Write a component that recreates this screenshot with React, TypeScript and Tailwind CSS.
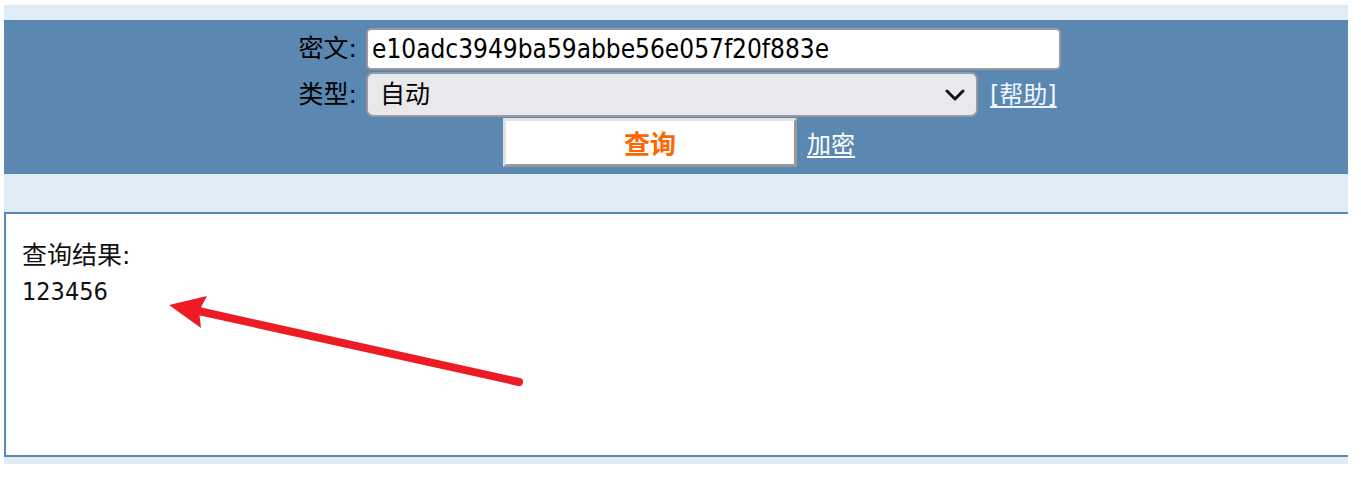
import React from "react";

const sans = { fontFamily: '"DejaVu Sans", "Noto Sans CJK SC", sans-serif' };
const cond = { fontFamily: '"DejaVu Sans Condensed", "DejaVu Sans", "Noto Sans CJK SC", sans-serif', fontStretch: "condensed" as const };

export default function App() {
  return (
    <div className="w-[1361px] min-h-[493px] bg-white pt-[5px] pl-[4px]" style={sans}>
      <div className="w-[1344px] bg-[#e0ecf5] pt-[15px] pb-[7px]">
        {/* header form */}
        <div className="h-[154px] bg-[#5b88b1] pt-[8px] pl-[284px]">
          <div className="grid grid-cols-[74px_auto] gap-x-[4px]">
            <div className="h-[42px] flex items-center justify-end pr-[5px] text-[25px] text-black whitespace-nowrap">
              密文:
            </div>
            <div className="h-[42px] flex items-center">
              <input
                readOnly
                value="e10adc3949ba59abbe56e057f20f883e"
                className="w-[695px] h-[42px] bg-white border-2 border-[#9a98a0] rounded-[5px] pl-[4px] text-[26px] text-black outline-none"
                style={cond}
              />
            </div>

            <div className="mt-[2px] h-[45px] flex items-center justify-end pr-[5px] text-[25px] text-black whitespace-nowrap">
              类型:
            </div>
            <div className="mt-[2px] h-[45px] flex items-center">
              <div className="w-[612px] h-[45px] bg-[#e9e8ed] border-2 border-[#9a98a0] rounded-[7px] pl-[12px] pr-[10px] flex items-center justify-between">
                <span className="text-[25px] text-black leading-none">自动</span>
                <svg width="20" height="12" viewBox="0 0 20 12" className="mr-[1px]">
                  <path d="M2 2 L10 10 L18 2" fill="none" stroke="#111" strokeWidth="3" strokeLinecap="round" strokeLinejoin="round" />
                </svg>
              </div>
              <a href="#" className="ml-[12px] text-[24px] text-[#f0f5ff] underline underline-offset-[3px] [text-decoration-skip-ink:none] leading-none">
                [帮助]
              </a>
            </div>

            <div className="mt-[1px] h-[49px]" />
            <div className="mt-[1px] h-[49px] flex items-center pl-[137px]">
              <button className="w-[294px] h-[49px] bg-white border-[3px] border-t-[#e2e2e2] border-l-[#e2e2e2] border-b-[#999999] border-r-[#999999] pt-[4px] text-[26px] font-bold text-[#ff6600] leading-none">
                查询
              </button>
              <a href="#" className="ml-[10px] pt-[4px] text-[24px] text-white underline underline-offset-[3px] [text-decoration-skip-ink:none] leading-none">
                加密
              </a>
            </div>
          </div>
        </div>

        <div className="h-[38px]" />

        {/* result box */}
        <div className="relative h-[245px] bg-white border-2 border-r-0 border-[#5b88b5] pl-[16px] pt-[24px]">
          <div className="text-[25px] leading-[36px] text-[#111]">查询结果:</div>
          <div className="text-[25px] leading-[36px] text-[#111]" style={cond}>123456</div>
          <svg
            className="absolute left-0 top-0 pointer-events-none"
            width="560"
            height="200"
            viewBox="0 0 560 200"
          >
            <line x1="188" y1="96" x2="513" y2="168" stroke="#ed1c24" strokeWidth="8" strokeLinecap="round" />
            <polygon points="163,91 201,82 193,97 195,114" fill="#ed1c24" />
          </svg>
        </div>
      </div>
    </div>
  );
}
